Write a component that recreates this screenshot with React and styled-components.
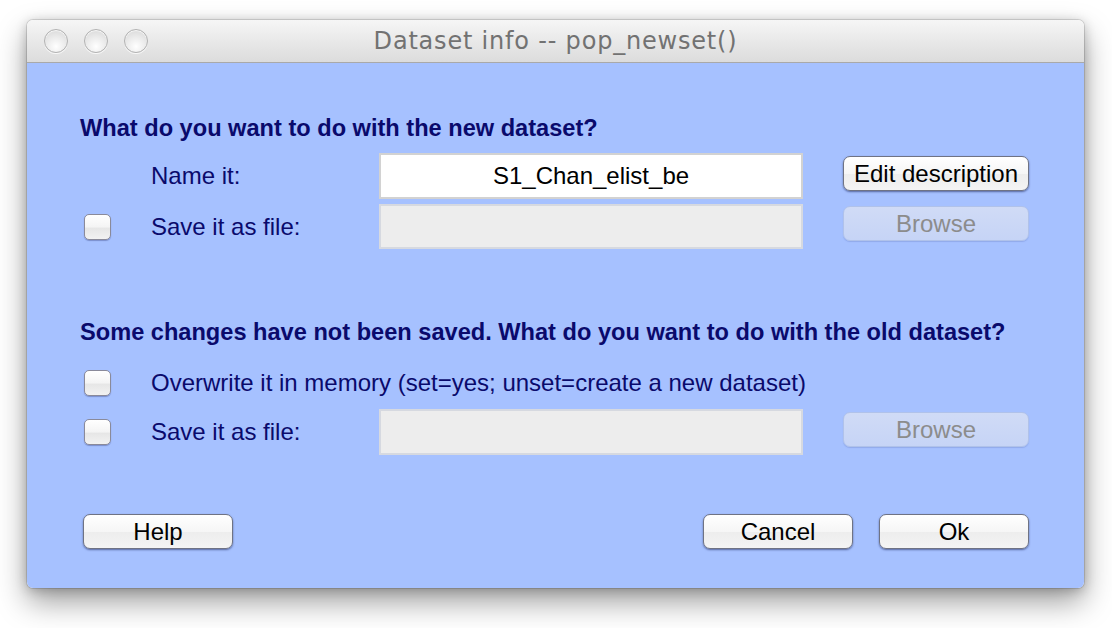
import React from "react";
import styled, { createGlobalStyle } from "styled-components";

const Global = createGlobalStyle`
  html, body { margin: 0; padding: 0; background: #ffffff; }
  body { font-family: "Liberation Sans", Arial, sans-serif; }
  #root { width: 1112px; height: 628px; overflow: hidden; }
`;

const Page = styled.div`
  width: 1112px;
  height: 628px;
  padding: 20px 0 0 27px;
  box-sizing: border-box;
`;

const Window = styled.div`
  width: 1057px;
  height: 568px;
  border-radius: 6px;
  overflow: hidden;
  display: flex;
  flex-direction: column;
  box-shadow: 0 14px 30px rgba(0, 0, 0, 0.38), 0 2px 12px rgba(0, 0, 0, 0.22),
    0 0 0 1px rgba(0, 0, 0, 0.12);
`;

const TitleBar = styled.div`
  height: 42px;
  flex: none;
  position: relative;
  display: flex;
  align-items: center;
  padding-left: 17px;
  gap: 16px;
  background: linear-gradient(#f6f6f6, #e6e6e6 60%, #dcdcdc);
  border-bottom: 1px solid #a9a9a9;
`;

const Light = styled.span`
  width: 24px;
  height: 24px;
  box-sizing: border-box;
  border-radius: 50%;
  border: 1px solid #b2b2b2;
  background: radial-gradient(circle at 50% 75%, #ffffff 0%, #ececec 45%, #d4d4d4 100%);
  box-shadow: inset 0 1px 1px rgba(255, 255, 255, 0.9), 0 1px 0 rgba(255, 255, 255, 0.8);
`;

const Title = styled.div`
  position: absolute;
  left: 0;
  right: 0;
  top: 0;
  bottom: 0;
  display: flex;
  align-items: center;
  justify-content: center;
  font-family: "DejaVu Sans", "Lucida Grande", sans-serif;
  font-size: 24px;
  letter-spacing: 0.8px;
  color: #727272;
  pointer-events: none;
`;

const Body = styled.div`
  flex: 1;
  background: #a6c1ff;
  padding: 51px 0 0 53px;
  display: flex;
  flex-direction: column;
`;

const Heading = styled.div`
  font-weight: bold;
  font-size: 23.6px;
  line-height: 28px;
  color: #0a0a6c;
  margin-top: ${(p) => p.$mt || 0}px;
`;

const Row = styled.div`
  display: grid;
  grid-template-columns: 71px 228px 424px 1fr;
  align-items: center;
  height: ${(p) => p.$h}px;
  margin-top: ${(p) => p.$mt}px;
`;

const Label = styled.div`
  grid-column: ${(p) => (p.$wide ? "2 / 5" : "2")};
  font-size: 24px;
  line-height: 28px;
  color: #0a0a6c;
  white-space: nowrap;
`;

const Check = styled.span`
  grid-column: 1;
  margin-left: 4px;
  width: 27px;
  height: 26px;
  box-sizing: border-box;
  border-radius: 5px;
  border: 1px solid #8a8a9a;
  background: linear-gradient(#ffffff, #f4f4f4 50%, #e6e6e6 55%, #f2f2f2);
  box-shadow: 0 1px 1px rgba(40, 50, 110, 0.35);
`;

const Field = styled.div`
  grid-column: 3;
  height: 100%;
  box-sizing: border-box;
  border: 2px solid ${(p) => (p.$disabled ? "#d6d9e0" : "#d2d2d2")};
  background: ${(p) => (p.$disabled ? "#ededed" : "#ffffff")};
  display: flex;
  align-items: center;
  justify-content: center;
  font-size: 24px;
  color: #000;
`;

const Button = styled.div`
  width: ${(p) => p.$w || 186}px;
  height: 35px;
  box-sizing: border-box;
  border-radius: 7px;
  display: flex;
  align-items: center;
  justify-content: center;
  font-size: 24px;
  white-space: nowrap;
  ${(p) =>
    p.$disabled
      ? `
    color: #8c8c8c;
    background: linear-gradient(#d0dbf6, #c6d4f6);
    border: 1px solid #b0c2ea;
    box-shadow: 0 1px 1px rgba(80, 100, 170, 0.25);
  `
      : `
    color: #000;
    background: linear-gradient(#ffffff, #f6f6f6 50%, #ededed 52%, #f4f4f4);
    border: 1px solid #6f7384;
    box-shadow: 0 1px 2px rgba(20, 30, 80, 0.55);
  `}
`;

const SideButton = styled(Button)`
  grid-column: 4;
  margin-left: 40px;
  align-self: start;
  margin-top: ${(p) => p.$top || 0}px;
`;

const Footer = styled.div`
  display: flex;
  align-items: center;
  margin-top: 59px;
  padding-left: 3px;
  width: 949px;
  box-sizing: border-box;
`;

const Spacer = styled.div`
  flex: 1;
`;

const FooterGroup = styled.div`
  display: flex;
  gap: 26px;
`;

export default function App() {
  return (
    <>
      <Global />
      <Page>
        <Window>
          <TitleBar>
            <Light />
            <Light />
            <Light />
            <Title>Dataset info -- pop_newset()</Title>
          </TitleBar>
          <Body>
            <Heading>What do you want to do with the new dataset?</Heading>
            <Row $h={46} $mt={11}>
              <Label>Name it:</Label>
              <Field>S1_Chan_elist_be</Field>
              <SideButton $top={3}>Edit description</SideButton>
            </Row>
            <Row $h={45} $mt={5}>
              <Check />
              <Label>Save it as file:</Label>
              <Field $disabled />
              <SideButton $disabled $top={2}>
                Browse
              </SideButton>
            </Row>
            <Heading $mt={69}>
              Some changes have not been saved. What do you want to do with the old dataset?
            </Heading>
            <Row $h={26} $mt={23}>
              <Check />
              <Label $wide>Overwrite it in memory (set=yes; unset=create a new dataset)</Label>
            </Row>
            <Row $h={46} $mt={14}>
              <Check />
              <Label>Save it as file:</Label>
              <Field $disabled />
              <SideButton $disabled $top={3}>
                Browse
              </SideButton>
            </Row>
            <Footer>
              <Button $w={150}>Help</Button>
              <Spacer />
              <FooterGroup>
                <Button $w={150}>Cancel</Button>
                <Button $w={150}>Ok</Button>
              </FooterGroup>
            </Footer>
          </Body>
        </Window>
      </Page>
    </>
  );
}
